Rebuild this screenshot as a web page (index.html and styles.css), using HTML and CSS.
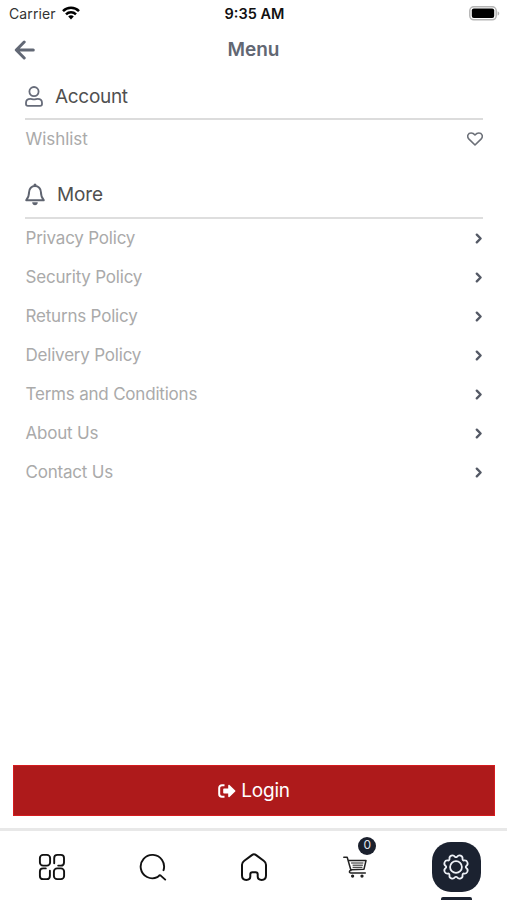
FILE: index.html
```html
<!DOCTYPE html>
<html lang="en">
<head>
<meta charset="utf-8">
<title>Menu</title>
<link rel="stylesheet" href="styles.css">
</head>
<body>
<div class="screen">
  <div class="status">
    <div class="carrier"><span>Carrier</span>
      <svg class="wifi" width="18" height="14" viewBox="0 0 18 14" fill="none" stroke="#000" stroke-width="2.5"><path d="M1 5.1C5.4.6 12.6.6 17 5.1"/><path d="M4 8.3c2.8-2.8 7.2-2.8 10 0"/><path d="M9 13.5l-2.8-3.1c1.6-1.4 4-1.4 5.6 0z" fill="#000" stroke="none"/></svg>
    </div>
    <div class="time">9:35 AM</div>
    <svg class="battery" width="31" height="15" viewBox="0 0 31 15"><rect x=".8" y=".8" width="26.4" height="13" rx="4" fill="#fff" stroke="#b5b5b5" stroke-width="1.5"/><rect x="2.8" y="2.6" width="22.4" height="9.4" rx="2" fill="#000"/><path d="M28.6 5.2c2.2.8 2.2 3.6 0 4.4z" fill="#b5b5b5"/></svg>
  </div>
  <header class="header">
    <svg width="22" height="20" viewBox="0 0 22 20" fill="none" stroke="#626875" stroke-width="3" stroke-linecap="round" stroke-linejoin="round"><path d="M10.2 2 2.3 10l7.9 8M3 10h16.3"/></svg>
    <h1>Menu</h1>
    <span></span>
  </header>
  <main class="content">
    <section>
      <h2 class="head account"><svg width="18" height="21" viewBox="0 0 18 21" fill="none" stroke="#676c7a" stroke-width="1.8"><circle cx="9" cy="5.6" r="4.6"/><path d="M5.4 12.800C2.800 12.800 1 14.600 1 17v1c0 1.200.8 1.900 1.900 1.900h12.200c1.100 0 1.900-.7 1.900-1.900v-1c0-2.400-1.800-4.200-4.400-4.200-1.200 0-2.100.5-3.600.5s-2.400-.5-3.600-.5z"/></svg><span>Account</span></h2>
      <div class="row wish"><span>Wishlist</span><svg width="16" height="14" viewBox="0 0 16 14" fill="none" stroke="#6c7078" stroke-width="1.6" stroke-linejoin="round"><path d="M8 13 2 7.100C-.7 4.200 1.200 1 4.200 1 5.800 1 7 1.800 8 3c1-1.200 2.200-2 3.800-2 3 0 4.900 3.200 2.200 6.100z"/></svg></div>
    </section>
    <section>
      <h2 class="head more"><svg width="20" height="23" viewBox="0 0 20 23"><path d="M1.200 17.200c1.500-1.700 2.900-3.300 2.900-8.100 0-3.400 2.500-6.100 5.900-6.100s5.900 2.700 5.900 6.100c0 4.800 1.400 6.400 2.900 8.100z" fill="none" stroke="#5f6470" stroke-width="1.900" stroke-linejoin="round"/><circle cx="10" cy="1.900" r="1.500" fill="#5f6470"/><path d="M7.200 19.300h5.600c0 3.900-5.600 3.900-5.600 0z" fill="#5f6470"/></svg><span>More</span></h2>
      <div class="row policy"><span>Privacy Policy</span><svg class="chev" viewBox="0 0 8 11"><path d="m1.800 1.700 3.800 3.800-3.800 3.800"/></svg></div>
      <div class="row policy"><span>Security Policy</span><svg class="chev" viewBox="0 0 8 11"><path d="m1.800 1.700 3.800 3.800-3.800 3.800"/></svg></div>
      <div class="row policy"><span>Returns Policy</span><svg class="chev" viewBox="0 0 8 11"><path d="m1.800 1.700 3.800 3.800-3.800 3.800"/></svg></div>
      <div class="row policy"><span>Delivery Policy</span><svg class="chev" viewBox="0 0 8 11"><path d="m1.800 1.700 3.800 3.800-3.800 3.800"/></svg></div>
      <div class="row policy"><span>Terms and Conditions</span><svg class="chev" viewBox="0 0 8 11"><path d="m1.800 1.700 3.800 3.800-3.800 3.800"/></svg></div>
      <div class="row policy"><span>About Us</span><svg class="chev" viewBox="0 0 8 11"><path d="m1.800 1.700 3.800 3.800-3.800 3.800"/></svg></div>
      <div class="row policy"><span>Contact Us</span><svg class="chev" viewBox="0 0 8 11"><path d="m1.800 1.700 3.800 3.800-3.800 3.800"/></svg></div>
    </section>
  </main>
  <button class="login"><svg width="18" height="14" viewBox="0 0 18 14"><path d="M6.500 1.200H4A2.800 2.800 0 0 0 1.200 4v6A2.800 2.800 0 0 0 4 12.800h2.500" fill="none" stroke="#fff" stroke-width="2"/><path d="M5.200 5.200c0-.5.300-.8.800-.8h4.200V1.500c0-.8.800-1.100 1.300-.6l5.700 5.500c.4.400.4.800 0 1.200l-5.700 5.500c-.5.500-1.300.2-1.300-.6V9.600H6c-.5 0-.8-.3-.8-.8z" fill="#fff"/></svg><span>Login</span></button>
  <nav class="tabs">
    <div class="tab"><svg width="28" height="28" viewBox="0 0 28 28" fill="none" stroke="#111" stroke-width="1.900" stroke-linecap="round" stroke-linejoin="round"><rect x="1.900" y="1.900" width="10.200" height="10.700" rx="3.200"/><path d="M16.200 10.300V5.100c0-2 1.200-3.200 3.200-3.200h3.400c2 0 3.200 1.200 3.200 3.200v4.300c0 2-1.200 3.200-3.200 3.200h-2.600M11.900 17.700v5.200c0 2-1.200 3.200-3.200 3.200H5.100c-2 0-3.200-1.200-3.200-3.200v-4.300c0-2 1.200-3.200 3.200-3.200h2.700"/><rect x="15.900" y="15.400" width="10.200" height="10.700" rx="3.200"/></svg></div>
    <div class="tab"><svg width="28" height="28" viewBox="0 0 28 28" fill="none" stroke="#111" stroke-width="1.900" stroke-linecap="round" stroke-linejoin="round"><path d="M24.500 17.200A11.700 11.700 0 1 0 18.300 24.200C19.800 23.500 20.200 21.400 21.700 22.600l4.500 4"/></svg></div>
    <div class="tab"><svg width="28" height="30" viewBox="0 0 28 30" fill="none" stroke="#111" stroke-width="2" stroke-linejoin="round"><path d="M2 12.800c0-2 .8-2.900 2.300-4l7.600-5.700c1.500-1.100 2.700-1.100 4.200 0l7.600 5.700c1.500 1.100 2.300 2 2.300 4v10.700c0 2.700-1.600 4.400-4.300 4.400-2.700 0-4-1.400-4-3.400v-2.300c0-1.300-.8-2-2.100-2h-3.200c-1.300 0-2.100.7-2.100 2v2.300c0 2-1.300 3.400-4 3.400S2 26.200 2 23.500z"/></svg></div>
    <div class="tab"><div class="cart"><svg width="24" height="22" viewBox="0 0 24 22" fill="none" stroke="#222" stroke-width="1.500" stroke-linecap="round" stroke-linejoin="round"><path d="M.8 1.200h3.400l3.800 13.300M6 4.500h17l-2 8.700-13.200.6M8 14c-2 .6-2.200 2.900-.1 2.900h14.400"/><path d="M8.500 7h11.500M10 9.200h9.500M10 11.300h9" stroke-width="1"/><circle cx="9.600" cy="20.100" r=".9" fill="#222"/><circle cx="19" cy="20.100" r=".9" fill="#222"/></svg><span class="badge">0</span></div></div>
    <div class="tab active"><div class="pill"><svg width="28" height="28" viewBox="-13.500 -13.500 27 27" fill="none" stroke="#eef1f7" stroke-width="1.700" stroke-linejoin="round"><circle r="5.700"/><path d="M1.050-9.950A2.900 2.900 0 0 1 6.290-7.770A1.300 1.300 0 0 0 7.770-6.290A2.900 2.900 0 0 1 9.950-1.050A1.300 1.300 0 0 0 9.950 1.050A2.900 2.900 0 0 1 7.770 6.290A1.300 1.300 0 0 0 6.290 7.770A2.900 2.900 0 0 1 1.050 9.950A1.300 1.300 0 0 0 -1.050 9.950A2.900 2.900 0 0 1 -6.290 7.770A1.300 1.300 0 0 0 -7.770 6.290A2.900 2.900 0 0 1 -9.950 1.050A1.300 1.300 0 0 0 -9.950 -1.050A2.900 2.900 0 0 1 -7.770 -6.290A1.300 1.300 0 0 0 -6.290 -7.770A2.900 2.900 0 0 1 -1.050 -9.950A1.300 1.300 0 0 0 1.050 -9.950z"/></svg></div><div class="marker"></div></div>
  </nav>
</div>
</body>
</html>
```
FILE: styles.css
```css
* { box-sizing: border-box; }
body { margin: 0; background: #fff; font-family: Inter, "Liberation Sans", sans-serif; }
h1, h2 { margin: 0; }
svg { display: block; flex: none; }
.screen { width: 507px; height: 900px; display: flex; flex-direction: column; overflow: hidden; }
.status { height: 28px; padding: 0 7px 1px 9px; display: grid; grid-template-columns: 1fr auto 1fr; align-items: center; color: #111; font-size: 14px; }
.carrier { display: flex; align-items: center; gap: 6px; color: #333; letter-spacing: .1px; }
.wifi { margin-top: -2px; }
.time { font-weight: 600; font-size: 14.500px; }
.battery { justify-self: end; }
.header { height: 44px; padding: 0 14px; display: grid; grid-template-columns: 1fr auto 1fr; align-items: center; }
.header h1 { font-size: 19px; line-height: 24px; font-weight: 600; color: #626773; }
.content { flex: 1; padding: 2px 24px 0 25px; }
.head { display: flex; align-items: center; font-weight: 400; font-size: 19px; line-height: 24px; color: #505050; }
.account { height: 46px; padding-top: 1px; gap: 12px; border-bottom: 2px solid #dcdcdc; letter-spacing: -.3px; }
.more { height: 61px; padding-top: 13px; gap: 12px; border-bottom: 2px solid #dedede; letter-spacing: -.1px; }
.more span { padding-top: 2px; }
.row { height: 39px; padding-left: .500px; display: flex; align-items: center; justify-content: space-between; font-size: 17px; color: #aaa; }
.wish { height: 38px; letter-spacing: -.05px; }
.policy { letter-spacing: -.2px; }
.policy span { padding-bottom: 1px; }
.chev { width: 8px; height: 11px; fill: none; stroke: #555a66; stroke-width: 2.400; stroke-linecap: round; stroke-linejoin: round; }
.login { height: 51px; flex: none; margin: 0 12px 12px 13px; padding: 0; border: 1px solid #d51b1e; background: #ae1a1b; color: #fff; font: 400 19px/24px Inter, "Liberation Sans", sans-serif; letter-spacing: -.2px; display: flex; align-items: center; justify-content: center; gap: 5px; }
.login span { padding-top: 1px; }
.tabs { height: 72px; flex: none; border-top: 3px solid #e8e8e8; padding: 1px 0 0 1px; display: grid; grid-template-columns: repeat(5, 1fr); }
.tab { height: 70px; display: flex; align-items: center; justify-content: center; }
.cart { position: relative; }
.badge { position: absolute; left: 15px; top: -19px; width: 18px; height: 18px; border-radius: 50%; background: #1b202d; color: #e3e6ed; font-size: 12px; line-height: 16px; text-align: center; }
.active { flex-direction: column; justify-content: flex-start; padding-top: 10px; gap: 5px; }
.pill { width: 49px; height: 50px; border-radius: 19px; background: #1b2230; display: flex; align-items: center; justify-content: center; flex: none; }
.marker { width: 31px; height: 4px; flex: none; border-radius: 2px 2px 0 0; background: #1b2230; }
```
